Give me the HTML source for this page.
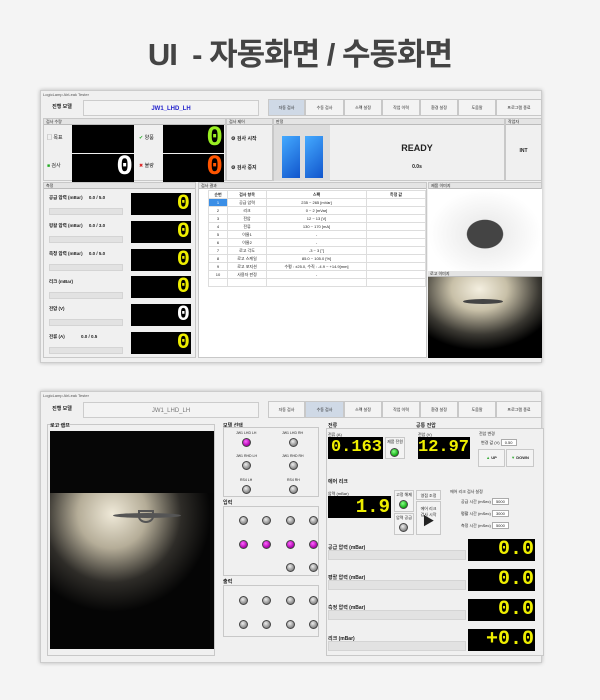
<!DOCTYPE html>
<html><head><meta charset="utf-8"><style>
*{margin:0;padding:0;box-sizing:border-box}
body{width:600px;height:700px;background:#f4f4f4;position:relative;overflow:hidden;font-family:"Liberation Sans","Noto Sans CJK KR",sans-serif;font-size:5px;color:#222}
.a{position:absolute}
.win{background:#f0f0f0;border:1px solid #ccc;box-shadow:0 0 4px rgba(0,0,0,.25)}
.blk{background:#000}
.pnl{border:1px solid #c8c8c8;background:#f0f0f0}
.hdr{background:#e4e4e4;border-bottom:1px solid #bbb;height:6px;font-size:4px;padding-left:2px;line-height:6px}
.btn{background:#f3f3f3;border:1px solid #c8c8c8;font-size:4px;line-height:16px;text-align:center}
.dg{font-family:"Liberation Mono",monospace;font-weight:bold;text-align:right;color:#ee0;line-height:1;overflow:hidden;white-space:nowrap;padding-right:1px}
.bar{background:#e2e2e2;border:1px solid #d4d4d4}
.led{width:9px;height:9px;border-radius:50%;background:radial-gradient(circle at 40% 35%,#eee,#888 70%,#555);border:1px solid #444}
.lp{background:radial-gradient(circle at 40% 35%,#f6f,#a0a 70%,#606)}
.lg{background:radial-gradient(circle at 40% 35%,#8f8,#1a1 70%,#060)}
td{border:1px solid #ddd;font-size:4px;text-align:center;height:8px}
</style></head><body>
<div class="a" style="left:0;top:29px;width:600px;text-align:center;font-size:31px;font-weight:bold;color:#444;letter-spacing:-1px">UI &nbsp;- 자동화면 / 수동화면</div>

<!-- TOP WINDOW -->
<div class="a win" style="left:40px;top:90px;width:502px;height:273px">
 <div class="a" style="left:2px;top:1px;font-size:4px;color:#555">LogicLamp AirLeak Tester</div>
 <div class="a" style="left:0;top:8px;width:42px;height:17px;line-height:17px;text-align:center;font-size:5px;font-weight:bold">진행 모델</div>
 <div class="a" style="left:42px;top:9px;width:176px;height:16px;border:1px solid #ccc;background:#f3f3f3;text-align:center;line-height:16px;color:#22c;font-weight:bold;font-size:6px">JW1_LHD_LH</div>
 <div class="a btn" style="left:227px;top:8px;width:37px;height:17px;background:#cfd9e6">자동 검사</div>
 <div class="a btn" style="left:264px;top:8px;width:39px;height:17px">수동 검사</div>
 <div class="a btn" style="left:303px;top:8px;width:38px;height:17px">스펙 설정</div>
 <div class="a btn" style="left:341px;top:8px;width:38px;height:17px">작업 이력</div>
 <div class="a btn" style="left:379px;top:8px;width:38px;height:17px">환경 설정</div>
 <div class="a btn" style="left:417px;top:8px;width:38px;height:17px">도움말</div>
 <div class="a btn" style="left:455px;top:8px;width:46px;height:17px">프로그램 종료</div>
 <div class="a pnl" style="left:2px;top:27px;width:183px;height:63px"><div class="hdr">검사 수량</div></div>
 <div class="a" style="left:6px;top:43px;font-size:5px">▢ 목표</div>
 <div class="a" style="left:6px;top:71px;font-size:5px"><span style="color:#2a2">■</span> 검사</div>
 <div class="a blk" style="left:31px;top:34px;width:62px;height:28px"></div>
 <div class="a blk dg" style="left:31px;top:63px;width:62px;height:28px;color:#fff;font-size:28px">0</div>
 <div class="a" style="left:98px;top:43px;font-size:5px"><span style="color:#2a2">✔</span> 양품</div>
 <div class="a" style="left:98px;top:71px;font-size:5px"><span style="color:#d22">✖</span> 불량</div>
 <div class="a blk dg" style="left:122px;top:34px;width:61px;height:28px;color:#9e2;font-size:28px">0</div>
 <div class="a blk dg" style="left:122px;top:63px;width:61px;height:28px;color:#f50;font-size:28px">0</div>
 <div class="a pnl" style="left:185px;top:27px;width:47px;height:63px"><div class="hdr">검사 제어</div></div>
 <div class="a" style="left:190px;top:44px;font-size:5px;font-weight:bold">⚙ 검사 시작</div>
 <div class="a" style="left:190px;top:73px;font-size:5px;font-weight:bold">⚙ 검사 중지</div>
 <div class="a pnl" style="left:232px;top:27px;width:232px;height:63px"><div class="hdr">판정</div></div>
 <div class="a" style="left:233px;top:34px;width:56px;height:56px;background:#ddd"></div>
 <div class="a" style="left:241px;top:45px;width:18px;height:42px;background:linear-gradient(135deg,#4af,#15c)"></div>
 <div class="a" style="left:264px;top:45px;width:18px;height:42px;background:linear-gradient(135deg,#4af,#15c)"></div>
 <div class="a" style="left:340px;top:52px;width:72px;text-align:center;font-size:9px;font-weight:bold">READY</div>
 <div class="a" style="left:340px;top:73px;width:72px;text-align:center;font-size:5px;font-weight:bold">0.0s</div>
 <div class="a pnl" style="left:464px;top:27px;width:37px;height:63px"><div class="hdr">작업자</div></div>
 <div class="a" style="left:464px;top:57px;width:37px;text-align:center;font-size:5px;font-weight:bold">INT</div>
 <div class="a pnl" style="left:2px;top:91px;width:153px;height:176px"><div class="hdr">측정</div></div>
 <div class="a" style="left:8px;top:104px;font-size:4.5px;font-weight:bold">공급 압력 (mBar) &nbsp;&nbsp;&nbsp;&nbsp;0.0 / 5.0</div>
 <div class="a" style="left:8px;top:132px;font-size:4.5px;font-weight:bold">평활 압력 (mBar) &nbsp;&nbsp;&nbsp;&nbsp;0.0 / 3.0</div>
 <div class="a" style="left:8px;top:160px;font-size:4.5px;font-weight:bold">측정 압력 (mBar) &nbsp;&nbsp;&nbsp;&nbsp;0.0 / 5.0</div>
 <div class="a" style="left:8px;top:188px;font-size:4.5px;font-weight:bold">리크 (mBar)</div>
 <div class="a" style="left:8px;top:215px;font-size:4.5px;font-weight:bold">전압 (V)</div>
 <div class="a" style="left:8px;top:243px;font-size:4.5px;font-weight:bold">전류 (A) &nbsp;&nbsp;&nbsp;&nbsp;&nbsp;&nbsp;&nbsp;&nbsp;&nbsp;&nbsp;&nbsp;&nbsp;0.0 / 0.5</div>
 <div class="a bar" style="left:8px;top:117px;width:74px;height:7px"></div>
 <div class="a bar" style="left:8px;top:145px;width:74px;height:7px"></div>
 <div class="a bar" style="left:8px;top:173px;width:74px;height:7px"></div>
 <div class="a bar" style="left:8px;top:201px;width:74px;height:7px"></div>
 <div class="a bar" style="left:8px;top:228px;width:74px;height:7px"></div>
 <div class="a bar" style="left:8px;top:256px;width:74px;height:7px"></div>
 <div class="a blk dg" style="left:90px;top:102px;width:60px;height:22px;font-size:22px">0</div>
 <div class="a blk dg" style="left:90px;top:130px;width:60px;height:22px;font-size:22px">0</div>
 <div class="a blk dg" style="left:90px;top:158px;width:60px;height:22px;font-size:22px">0</div>
 <div class="a blk dg" style="left:90px;top:185px;width:60px;height:22px;font-size:22px">0</div>
 <div class="a blk dg" style="left:90px;top:213px;width:60px;height:22px;font-size:22px;color:#fff">0</div>
 <div class="a blk dg" style="left:90px;top:241px;width:60px;height:22px;font-size:22px">0</div>
 <div class="a pnl" style="left:157px;top:91px;width:229px;height:176px;background:#fff"><div class="hdr">검사 결과</div></div>
 <table class="a" style="left:167px;top:99px;width:218px;border-collapse:collapse;background:#fff">
 <tr style="font-weight:bold"><td style="width:19px">순번</td><td style="width:39px">검사 항목</td><td style="width:100px">스펙</td><td>측정 값</td></tr>
 <tr><td style="background:#3a8ee6;color:#fff">1</td><td>공급 압력</td><td>235 ~ 265 [mVar]</td><td></td></tr>
 <tr><td>2</td><td>리크</td><td>0 ~ 2 [mVar]</td><td></td></tr>
 <tr><td>3</td><td>전압</td><td>12 ~ 13 [V]</td><td></td></tr>
 <tr><td>4</td><td>전류</td><td>130 ~ 170 [mA]</td><td></td></tr>
 <tr><td>5</td><td>이물1</td><td>-</td><td></td></tr>
 <tr><td>6</td><td>이물2</td><td>-</td><td></td></tr>
 <tr><td>7</td><td>로고 각도</td><td>-3 ~ 3 [°]</td><td></td></tr>
 <tr><td>8</td><td>로고 스케일</td><td>85.0 ~ 105.0 [%]</td><td></td></tr>
 <tr><td>9</td><td>로고 포지션</td><td>수평 : ±25.0, 수직 : -4.9 ~ +14.9[mm]</td><td></td></tr>
 <tr><td>10</td><td>사용자 판정</td><td>-</td><td></td></tr>
 <tr><td></td><td></td><td></td><td></td></tr>
 </table>
 <div class="a pnl" style="left:387px;top:91px;width:114px;height:176px"><div class="hdr">제품 이미지</div></div>
 <div class="a" style="left:387px;top:98px;width:114px;height:82px;background:radial-gradient(ellipse at 50% 55%,#444 0 22%,#eee 23%,#fff 70%)"></div>
 <div class="a hdr" style="left:387px;top:180px;width:114px">로고 이미지</div>
 <div class="a" style="left:387px;top:186px;width:114px;height:81px;background:radial-gradient(ellipse 70% 75% at 45% 15%,#f4efe0 0%,#c8c0a8 35%,#3a3832 75%,#000 100%)"></div>
 <div class="a" style="left:422px;top:208px;width:40px;height:5px;border-radius:50%;background:#444"></div>
</div>

<!-- BOTTOM WINDOW -->
<div class="a win" style="left:40px;top:391px;width:502px;height:272px">
 <div class="a" style="left:2px;top:1px;font-size:4px;color:#555">LogicLamp AirLeak Tester</div>
 <div class="a" style="left:0;top:9px;width:42px;height:17px;line-height:17px;text-align:center;font-size:5px;font-weight:bold">진행 모델</div>
 <div class="a" style="left:42px;top:10px;width:176px;height:16px;border:1px solid #ccc;background:#f3f3f3;text-align:center;line-height:16px;color:#777;font-size:6px">JW1_LHD_LH</div>
 <div class="a btn" style="left:227px;top:9px;width:37px;height:17px">자동 검사</div>
 <div class="a btn" style="left:264px;top:9px;width:39px;height:17px;background:#cfd9e6">수동 검사</div>
 <div class="a btn" style="left:303px;top:9px;width:38px;height:17px">스펙 설정</div>
 <div class="a btn" style="left:341px;top:9px;width:38px;height:17px">작업 이력</div>
 <div class="a btn" style="left:379px;top:9px;width:38px;height:17px">환경 설정</div>
 <div class="a btn" style="left:417px;top:9px;width:38px;height:17px">도움말</div>
 <div class="a btn" style="left:455px;top:9px;width:46px;height:17px">프로그램 종료</div>
 <div class="a pnl" style="left:6px;top:32px;width:168px;height:232px"></div>
 <div class="a" style="left:9px;top:30px;font-size:5px;font-weight:bold">로고 램프</div>
 <div class="a" style="left:9px;top:39px;width:164px;height:218px;background:radial-gradient(ellipse 60% 45% at 38% 38%,#efe9d8 0%,#b5ad98 35%,#2e2c28 70%,#050505 100%)"></div>
 <div class="a" style="left:9px;top:39px;width:164px;height:62px;background:#060606"></div>
 <div class="a" style="left:72px;top:121px;width:68px;height:5px;border-radius:50%;background:#555"></div>
 <div class="a" style="left:97px;top:118px;width:16px;height:13px;border-radius:0 0 50% 50%;border:2px solid #555"></div>
 <div class="a" style="left:182px;top:30px;font-size:5px;font-weight:bold">모델 선택</div>
 <div class="a pnl" style="left:182px;top:35px;width:96px;height:70px"></div>
 <div class="a" style="left:195px;top:39px;font-size:3.5px">JW1 LHD LH</div><div class="a led lp" style="left:201px;top:46px"></div>
 <div class="a" style="left:241px;top:39px;font-size:3.5px">JW1 LHD RH</div><div class="a led" style="left:248px;top:46px"></div>
 <div class="a" style="left:195px;top:62px;font-size:3.5px">JW1 RHD LH</div><div class="a led" style="left:201px;top:69px"></div>
 <div class="a" style="left:241px;top:62px;font-size:3.5px">JW1 RHD RH</div><div class="a led" style="left:248px;top:69px"></div>
 <div class="a" style="left:199px;top:86px;font-size:3.5px">RS4 LH</div><div class="a led" style="left:201px;top:93px"></div>
 <div class="a" style="left:246px;top:86px;font-size:3.5px">RS4 RH</div><div class="a led" style="left:248px;top:93px"></div>
 <div class="a" style="left:182px;top:107px;font-size:5px;font-weight:bold">입력</div>
 <div class="a pnl" style="left:182px;top:114px;width:96px;height:70px"></div>
 <div class="a led" style="left:198px;top:124px"></div><div class="a led" style="left:221px;top:124px"></div><div class="a led" style="left:245px;top:124px"></div><div class="a led" style="left:268px;top:124px"></div>
 <div class="a led lp" style="left:198px;top:148px"></div><div class="a led lp" style="left:221px;top:148px"></div><div class="a led lp" style="left:245px;top:148px"></div><div class="a led lp" style="left:268px;top:148px"></div>
 <div class="a led" style="left:245px;top:171px"></div><div class="a led" style="left:268px;top:171px"></div>
 <div class="a" style="left:182px;top:186px;font-size:5px;font-weight:bold">출력</div>
 <div class="a pnl" style="left:182px;top:193px;width:96px;height:52px"></div>
 <div class="a led" style="left:198px;top:204px"></div><div class="a led" style="left:221px;top:204px"></div><div class="a led" style="left:245px;top:204px"></div><div class="a led" style="left:268px;top:204px"></div>
 <div class="a led" style="left:198px;top:228px"></div><div class="a led" style="left:221px;top:228px"></div><div class="a led" style="left:245px;top:228px"></div><div class="a led" style="left:268px;top:228px"></div>
 <div class="a pnl" style="left:285px;top:36px;width:218px;height:228px"></div>
 <div class="a" style="left:287px;top:30px;font-size:5px;font-weight:bold">전류</div>
 <div class="a" style="left:375px;top:30px;font-size:5px;font-weight:bold">공통 전압</div>
 <div class="a" style="left:287px;top:40px;font-size:4px">전류 (A)</div>
 <div class="a blk dg" style="left:287px;top:45px;width:55px;height:22px;font-size:17px;line-height:22px">0.163</div>
 <div class="a btn" style="left:344px;top:45px;width:20px;height:22px;line-height:8px">제품 전원</div><div class="a led lg" style="left:349px;top:56px"></div>
 <div class="a" style="left:377px;top:40px;font-size:4px">전압 (V)</div>
 <div class="a blk dg" style="left:377px;top:45px;width:52px;height:22px;font-size:17px;line-height:22px">12.97</div>
 <div class="a" style="left:438px;top:39px;font-size:4px">전압 변경</div>
 <div class="a" style="left:440px;top:48px;font-size:4px">변경 값 (V) <span style="background:#fff;border:1px solid #aaa;padding:0 3px">0.50</span></div>
 <div class="a btn" style="left:437px;top:57px;width:27px;height:18px;font-weight:bold"><span style="color:#3a3">▲</span> UP</div>
 <div class="a btn" style="left:465px;top:57px;width:28px;height:18px;font-weight:bold"><span style="color:#3a3">▼</span> DOWN</div>
 <div class="a" style="left:287px;top:86px;font-size:5px;font-weight:bold">에어 리크</div>
 <div class="a" style="left:287px;top:99px;font-size:4px">압력 (mBar)</div>
 <div class="a blk dg" style="left:287px;top:104px;width:63px;height:22px;font-size:19px;line-height:22px">1.9</div>
 <div class="a btn" style="left:353px;top:98px;width:20px;height:22px;line-height:8px">고정 해제</div><div class="a led lg" style="left:358px;top:108px"></div>
 <div class="a btn" style="left:353px;top:121px;width:20px;height:22px;line-height:8px">압력 공급</div><div class="a led" style="left:358px;top:131px"></div>
 <div class="a btn" style="left:375px;top:98px;width:25px;height:10px;line-height:9px">영점 조정</div>
 <div class="a btn" style="left:375px;top:109px;width:25px;height:34px;line-height:6px;padding-top:4px">에어 리크<br>검사 시작<br><span style="font-size:12px">▶</span></div>
 <div class="a" style="left:409px;top:97px;font-size:4px">에어 리크 검사 설정</div>
 <div class="a" style="left:420px;top:107px;font-size:4px">공급 시간 (mSec) <span style="background:#fff;border:1px solid #aaa;padding:0 3px">5000</span></div>
 <div class="a" style="left:420px;top:119px;font-size:4px">평활 시간 (mSec) <span style="background:#fff;border:1px solid #aaa;padding:0 3px">3000</span></div>
 <div class="a" style="left:420px;top:131px;font-size:4px">측정 시간 (mSec) <span style="background:#fff;border:1px solid #aaa;padding:0 3px">5000</span></div>
 <div class="a" style="left:287px;top:152px;font-size:5px;font-weight:bold">공급 압력 (mBar)</div>
 <div class="a" style="left:287px;top:182px;font-size:5px;font-weight:bold">평활 압력 (mBar)</div>
 <div class="a" style="left:287px;top:212px;font-size:5px;font-weight:bold">측정 압력 (mBar)</div>
 <div class="a" style="left:287px;top:243px;font-size:5px;font-weight:bold">리크 (mBar)</div>
 <div class="a bar" style="left:287px;top:158px;width:138px;height:10px"></div>
 <div class="a bar" style="left:287px;top:188px;width:138px;height:10px"></div>
 <div class="a bar" style="left:287px;top:218px;width:138px;height:10px"></div>
 <div class="a bar" style="left:287px;top:249px;width:138px;height:10px"></div>
 <div class="a blk dg" style="left:427px;top:147px;width:67px;height:22px;font-size:20px;line-height:22px">0.0</div>
 <div class="a blk dg" style="left:427px;top:177px;width:67px;height:22px;font-size:20px;line-height:22px">0.0</div>
 <div class="a blk dg" style="left:427px;top:207px;width:67px;height:22px;font-size:20px;line-height:22px">0.0</div>
 <div class="a blk dg" style="left:427px;top:237px;width:67px;height:22px;font-size:20px;line-height:22px">+0.0</div>
</div>
</body></html>
